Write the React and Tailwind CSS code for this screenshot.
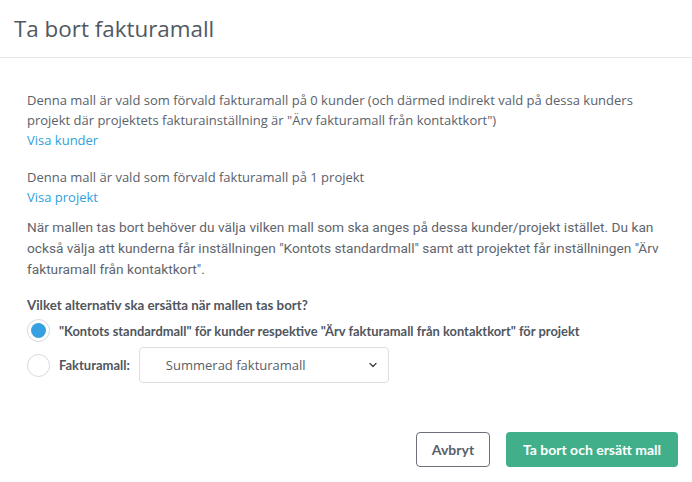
import React, { useState } from "react";

const App = () => {
  const [choice, setChoice] = useState("standard");

  return (
    <div className="w-[692px] h-[482px] bg-white flex flex-col font-['Open_Sans',sans-serif] text-[#5a616b]">
      {/* Header */}
      <div className="h-[58px] border-b border-[#e6e6e6] flex items-center px-[14px]">
        <h1 className="text-[22.4px] text-[#505863] font-medium">
          Ta bort fakturamall
        </h1>
      </div>

      {/* Body */}
      <div className="px-[27px] pt-[32px] flex flex-col text-[13px] leading-[20px]">
        <p>
          Denna mall är vald som förvald fakturamall på 0 kunder (och därmed
          indirekt vald på dessa kunders projekt där projektets
          fakturainställning är "Ärv fakturamall från kontaktkort")
        </p>
        <a className="text-[#2f9fde] cursor-pointer self-start">Visa kunder</a>

        <p className="mt-[17px]">
          Denna mall är vald som förvald fakturamall på 1 projekt
        </p>
        <a className="text-[#2f9fde] cursor-pointer self-start">Visa projekt</a>

        <p className="mt-[10px] font-['Roboto',sans-serif] text-[13.7px] leading-[21px] text-[#5f656d] -mr-[2px]">
          När mallen tas bort behöver du välja vilken mall som ska anges på
          dessa kunder/projekt istället. Du kan också välja att kunderna får
          inställningen "Kontots standardmall" samt att projektet får
          inställningen "Ärv fakturamall från kontaktkort".
        </p>

        <div className="mt-[15px] font-['Lato',sans-serif] font-bold text-[13.3px] text-[#4f5660]">
          Vilket alternativ ska ersätta när mallen tas bort?
        </div>

        <label
          className="mt-[4px] flex items-center gap-[9px] cursor-pointer"
          onClick={() => setChoice("standard")}
        >
          <span className="w-[23px] h-[23px] rounded-full border border-[#d6d9dd] flex items-center justify-center shrink-0">
            {choice === "standard" && (
              <span className="w-[15px] h-[15px] rounded-full bg-[#36a0e0]" />
            )}
          </span>
          <span className="font-['Lato',sans-serif] font-bold text-[12.9px] text-[#4f5660]">
            "Kontots standardmall" för kunder respektive "Ärv fakturamall från
            kontaktkort" för projekt
          </span>
        </label>

        <div className="mt-[5px] flex items-center gap-[9px]">
          <span
            className="w-[23px] h-[23px] rounded-full border border-[#d6d9dd] flex items-center justify-center shrink-0 cursor-pointer"
            onClick={() => setChoice("template")}
          >
            {choice === "template" && (
              <span className="w-[15px] h-[15px] rounded-full bg-[#36a0e0]" />
            )}
          </span>
          <span className="font-['Lato',sans-serif] font-bold text-[13px] text-[#4f5660]">
            Fakturamall:
          </span>
          <div className="w-[250px] h-[36px] border border-[#dcdfe3] rounded-[4px] flex items-center justify-between pl-[26px] pr-[10px]">
            <span className="text-[#575e67]">Summerad fakturamall</span>
            <svg width="10" height="10" viewBox="0 0 10 10" fill="none">
              <path
                d="M2 3.5 L5 6.5 L8 3.5"
                stroke="#3d434b"
                strokeWidth="1.3"
                strokeLinecap="round"
                strokeLinejoin="round"
              />
            </svg>
          </div>
        </div>
      </div>

      {/* Footer */}
      <div className="mt-auto pb-[15px] pr-[14px] flex justify-end gap-[16px] font-['Lato',sans-serif]">
        <button className="w-[74px] h-[35px] border border-[#6b7079] rounded-[4px] text-[14px] font-bold text-[#5a616b]">
          Avbryt
        </button>
        <button className="w-[172px] h-[35px] rounded-[4px] bg-[#41b08a] text-white text-[14px] font-bold">
          Ta bort och ersätt mall
        </button>
      </div>
    </div>
  );
};

export default App;
